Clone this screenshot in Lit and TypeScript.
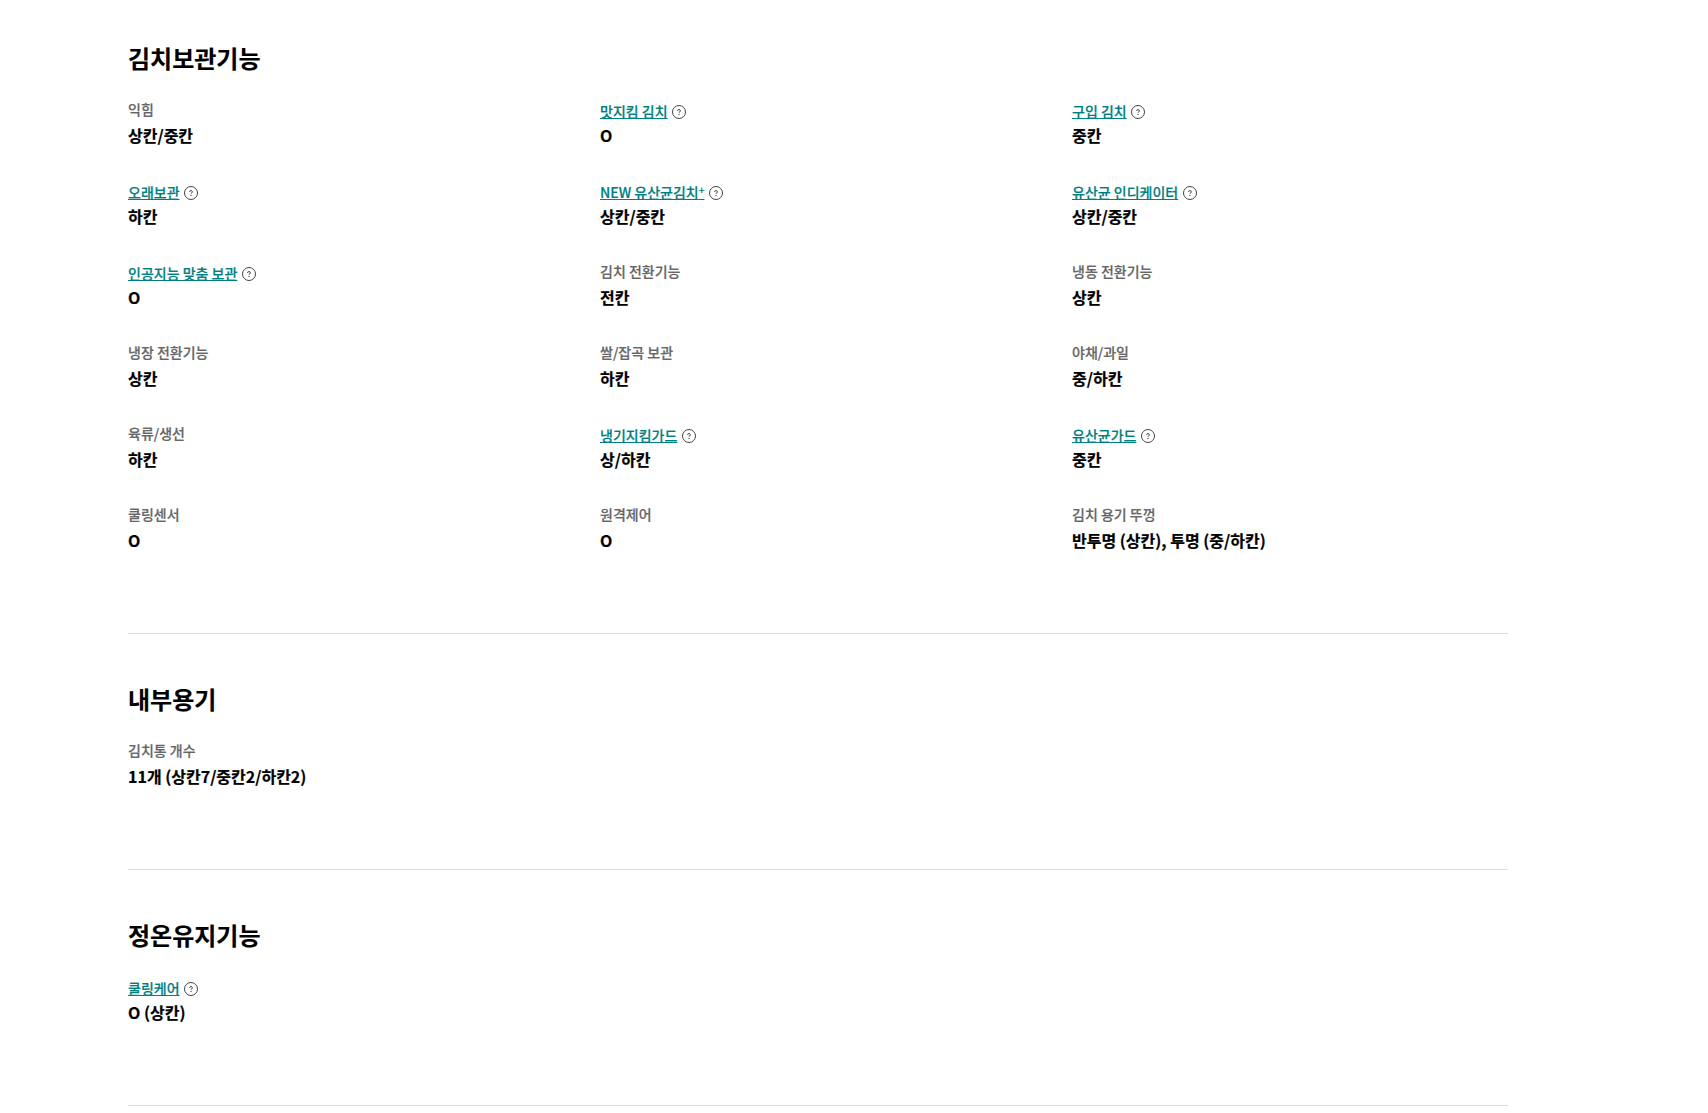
import { LitElement, html, css } from "lit";
import { customElement } from "lit/decorators.js";

type Item = { label: string; value: string; link?: boolean; sup?: boolean };

const sections: { title: string; items: Item[] }[] = [
  {
    title: "김치보관기능",
    items: [
      { label: "익힘", value: "상칸/중칸" },
      { label: "맛지킴 김치", value: "O", link: true },
      { label: "구입 김치", value: "중칸", link: true },
      { label: "오래보관", value: "하칸", link: true },
      { label: "NEW 유산균김치", value: "상칸/중칸", link: true, sup: true },
      { label: "유산균 인디케이터", value: "상칸/중칸", link: true },
      { label: "인공지능 맞춤 보관", value: "O", link: true },
      { label: "김치 전환기능", value: "전칸" },
      { label: "냉동 전환기능", value: "상칸" },
      { label: "냉장 전환기능", value: "상칸" },
      { label: "쌀/잡곡 보관", value: "하칸" },
      { label: "야채/과일", value: "중/하칸" },
      { label: "육류/생선", value: "하칸" },
      { label: "냉기지킴가드", value: "상/하칸", link: true },
      { label: "유산균가드", value: "중칸", link: true },
      { label: "쿨링센서", value: "O" },
      { label: "원격제어", value: "O" },
      { label: "김치 용기 뚜껑", value: "반투명 (상칸), 투명 (중/하칸)" },
    ],
  },
  { title: "내부용기", items: [{ label: "김치통 개수", value: "11개 (상칸7/중칸2/하칸2)" }] },
  { title: "정온유지기능", items: [{ label: "쿨링케어", value: "O (상칸)", link: true }] },
];

@customElement("app-root")
export class AppRoot extends LitElement {
  static styles = css`
    :host {
      display: block;
      background: #fff;
      min-height: 1113px;
      font-family: "Noto Sans CJK KR", "Noto Sans", sans-serif;
      color: #000;
    }
    .wrap {
      width: 1380px;
      margin-left: 128px;
    }
    section {
      padding-top: 47px;
      padding-bottom: 81px;
      border-bottom: 1px solid #ddd;
    }
    section:first-child {
      padding-top: 40px;
    }
    h2 {
      margin: 0 0 23px;
      font-size: 24px;
      line-height: 36px;
      font-weight: 700;
      -webkit-text-stroke: 0.15px currentColor;
    }
    .grid {
      display: grid;
      grid-template-columns: repeat(3, 436px);
      column-gap: 36px;
      row-gap: 33px;
    }
    .label {
      display: flex;
      align-items: flex-start;
      height: 24px;
      font-size: 14px;
      line-height: 21px;
      font-weight: 500;
      color: #666;
      -webkit-text-stroke: 0.2px currentColor;
    }
    .label.link {
      align-items: center;
      padding-top: 1px;
      height: 23px;
    }
    a {
      color: #007f80;
      text-decoration: underline;
      text-decoration-thickness: 1px;
    }
    sup {
      font-size: 10px;
      line-height: 0;
      vertical-align: 4px;
    }
    svg {
      width: 14px;
      height: 14px;
      margin-left: 4.6px;
      flex: none;
    }
    .value {
      font-size: 16px;
      line-height: 24px;
      font-weight: 700;
      -webkit-text-stroke: 0.2px currentColor;
    }
  `;

  private icon() {
    return html`<svg viewBox="0 0 14 14" fill="none">
      <circle cx="7" cy="7" r="6.5" stroke="#444" stroke-width="1"></circle>
      <path d="M5.7 5.9a1.3 1.3 0 1 1 2 1c-.5.3-.7.4-.7.9" stroke="#333" stroke-width="1"></path>
      <circle cx="7" cy="9.4" r=".6" fill="#333"></circle>
    </svg>`;
  }

  render() {
    return html`<div class="wrap">
      ${sections.map(
        (s) => html`<section>
          <h2>${s.title}</h2>
          <div class="grid">
            ${s.items.map(
              (i) => html`<div>
                <div class="label ${i.link ? "link" : ""}">
                  ${i.link
                    ? html`<a href="#">${i.label}${i.sup ? html`<sup>+</sup>` : ""}</a>${this.icon()}`
                    : i.label}
                </div>
                <div class="value">${i.value}</div>
              </div>`
            )}
          </div>
        </section>`
      )}
    </div>`;
  }
}
